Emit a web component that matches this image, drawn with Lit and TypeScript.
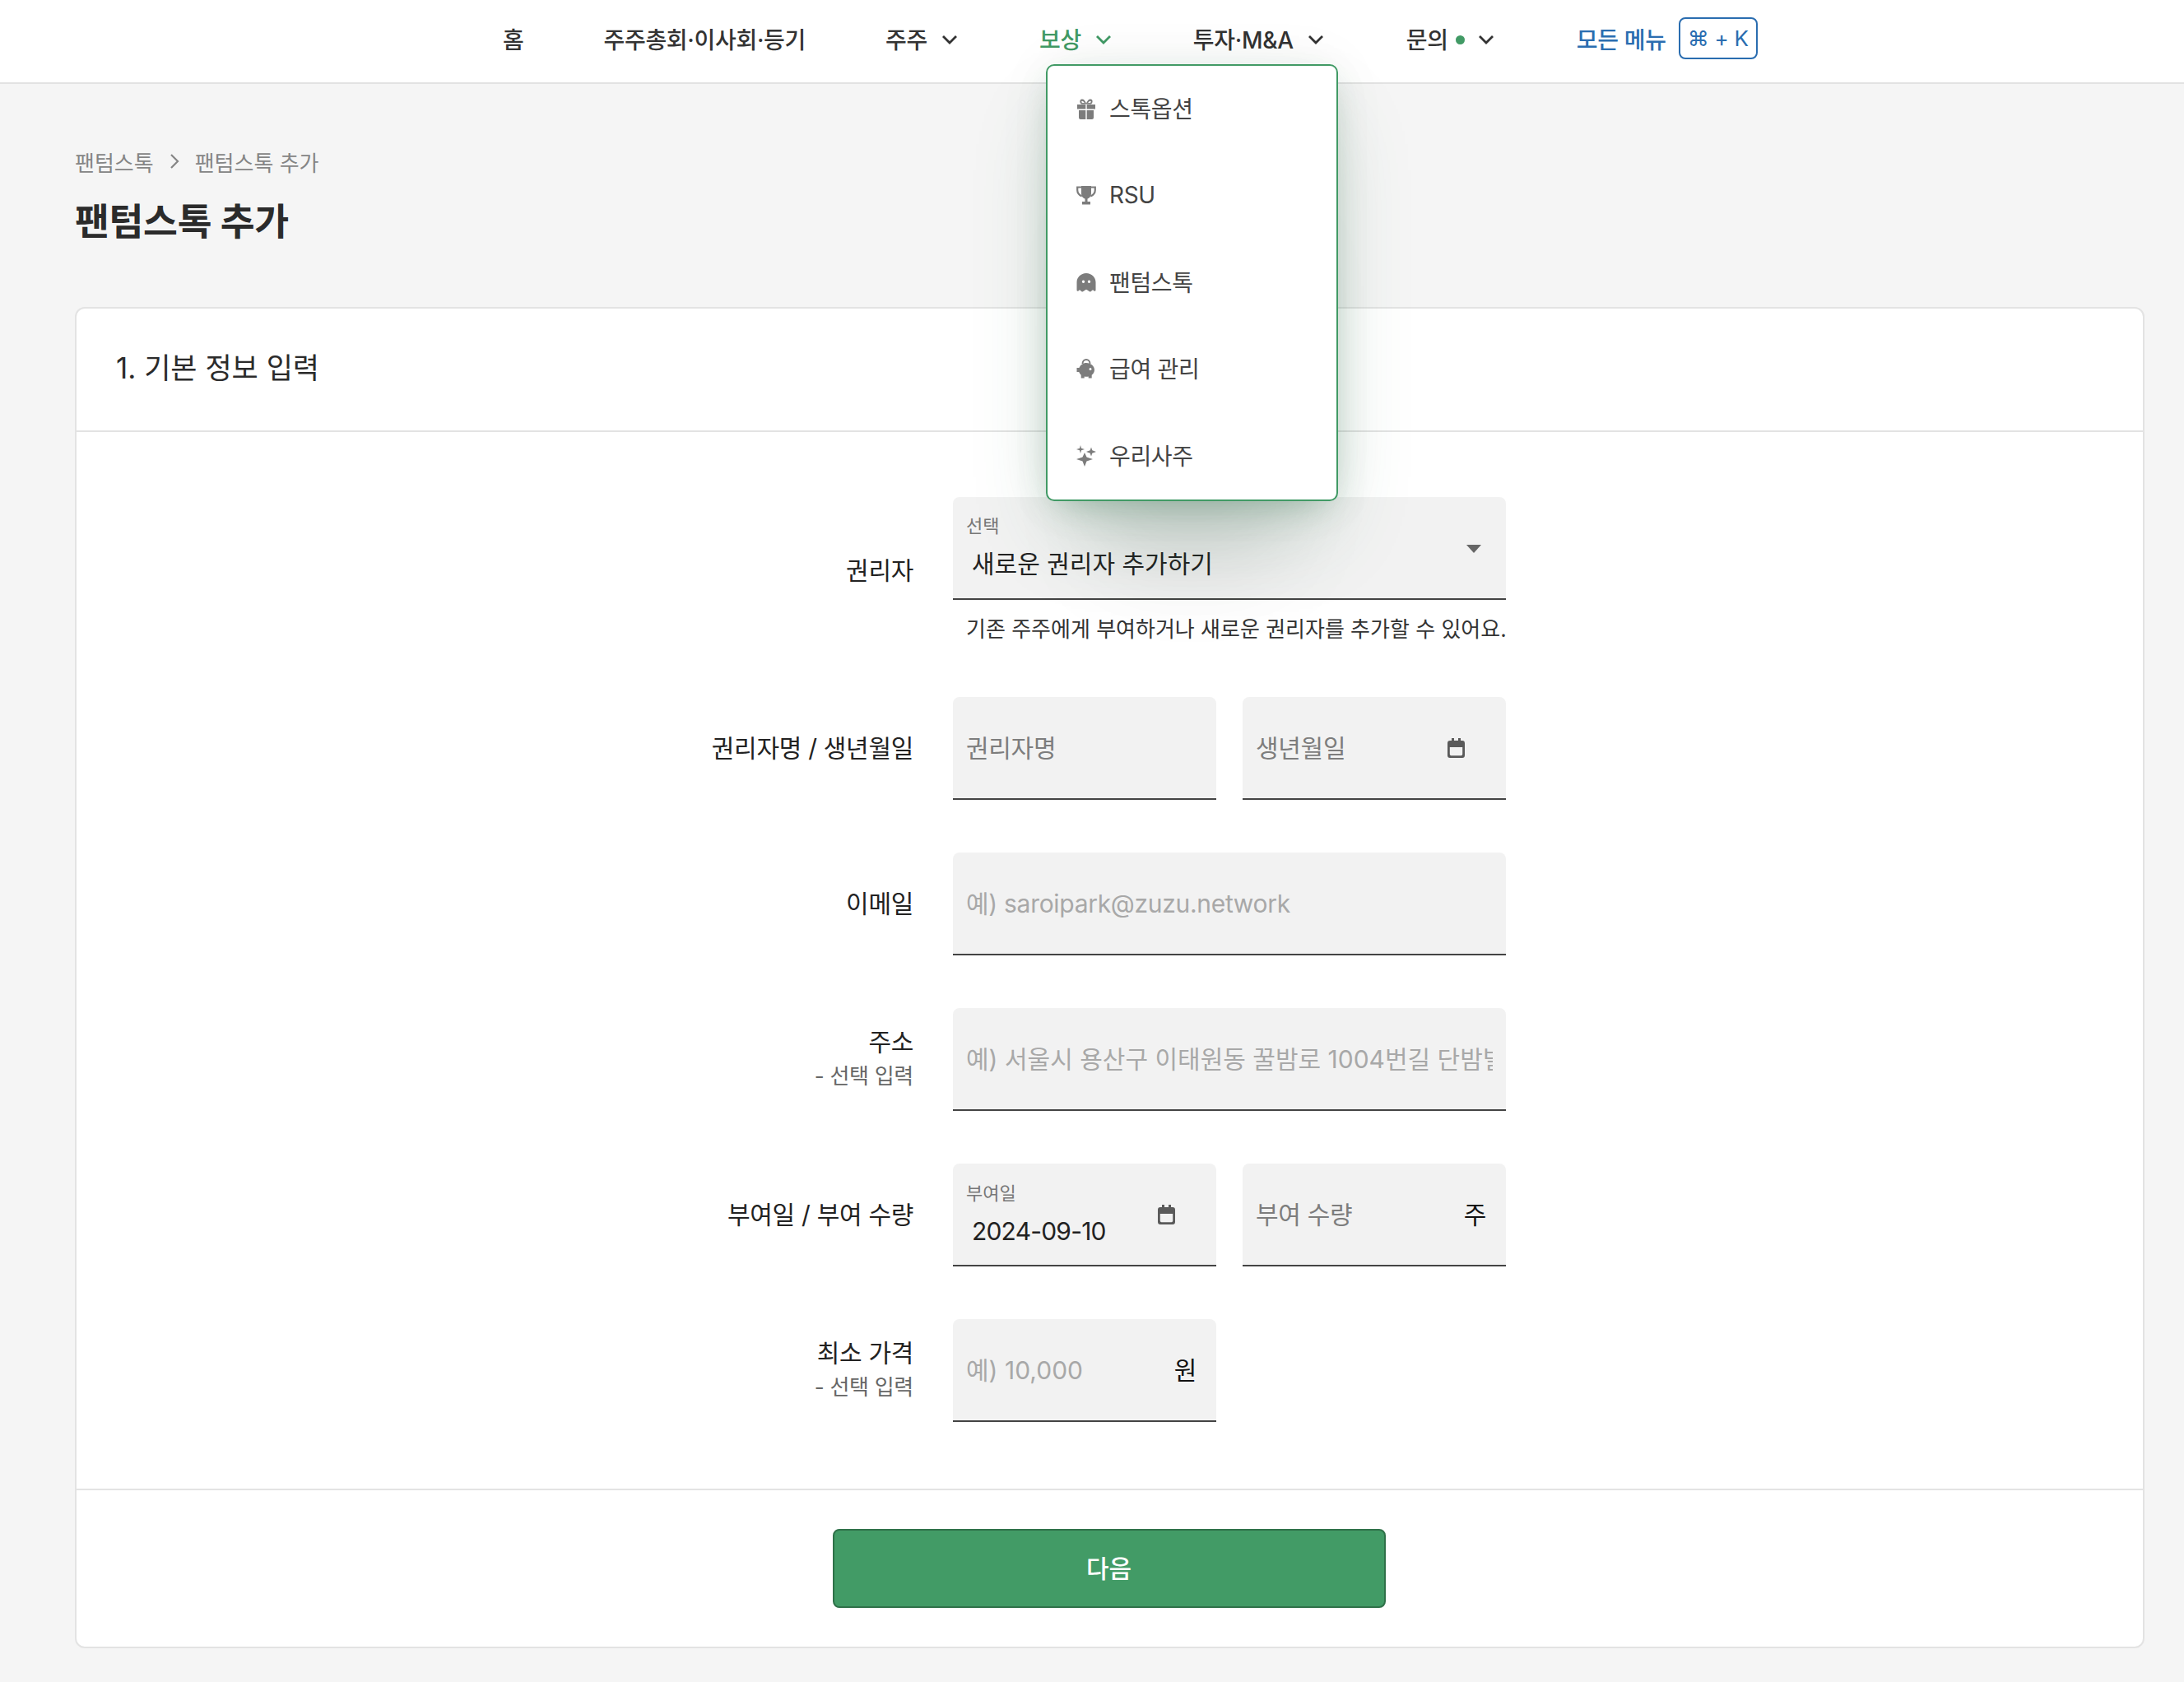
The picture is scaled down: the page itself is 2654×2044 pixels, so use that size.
import { LitElement, html, css, svg } from "lit";
import { customElement } from "lit/decorators.js";

const chevron = html`<svg class="chev" viewBox="0 0 24 24"><path d="M4 8l8 8 8-8" fill="none" stroke="currentColor" stroke-width="2.8"/></svg>`;
const calendar = html`<svg class="cal" viewBox="0 0 21 24"><path fill="#5a5a5a" d="M5 0h3v3h5V0h3v3h2a3 3 0 0 1 3 3v15a3 3 0 0 1-3 3H3a3 3 0 0 1-3-3V6a3 3 0 0 1 3-3h2zM2.800 11v8.500a1.700 1.700 0 0 0 1.700 1.700h12a1.700 1.700 0 0 0 1.700-1.700V11z"/></svg>`;

const menuIcons = {
  gift: svg`<path d="M1 7h10.300v5.500H1zM12.700 7H23v5.500H12.700zM3 14h8.300v11H5a2 2 0 0 1-2-2zM12.700 14H21v9a2 2 0 0 1-2 2h-6.300z"/><path fill-rule="evenodd" d="M12 5.500C10.500 2 8.500 0 6.500 .5 4 1 3.500 4.500 6 6.500h12C20.500 4.500 20 1 17.500 .5 15.500 0 13.500 2 12 5.500zM6.800 2.700c1-.3 2.500 1.200 3 2.300H7.300c-1.300-.7-1.300-2 -.5-2.300zM17.200 2.700c.8.300.8 1.600-.5 2.300h-2.500c.5-1.100 2-2.600 3-2.300z"/>`,
  trophy: svg`<path d="M6 1h12v9c0 3.500-2.500 6-4.500 6.500V20H17v3.500H7V20h3.500v-3.500C8.500 16 6 13.500 6 10z"/><path fill="none" stroke="currentColor" stroke-width="2.200" d="M6 2.500H1.200v3.500c0 4 2.300 6 5.500 7.500M18 2.500h4.800V6c0 4-2.300 6-5.500 7.500"/>`,
  ghost: svg`<path fill-rule="evenodd" d="M12 1c6.500 0 11.500 5 11.500 11v9.500c0 1.200-1.200 1.700-2 1l-1.500-1.300-2.400 2c-.5.400-1.200.4-1.700 0L12.500 21h-1l-3.400 2.200c-.5.400-1.200.4-1.700 0L4 21.200l-1.500 1.300c-.8.700-2 .2-2-1V12C.5 6 5.500 1 12 1zM8.500 9.500a1.700 1.700 0 1 0 0 3.400 1.700 1.700 0 0 0 0-3.400zM15.500 9.500a1.700 1.700 0 1 0 0 3.400 1.700 1.700 0 0 0 0-3.400z"/>`,
  piggy: svg`<path fill-rule="evenodd" d="M12 5c5.500 0 10 3.800 10 8.500 0 2.500-1.300 4.700-3.300 6.200V23.500h-4V21.500a12 12 0 0 1-5 0v2h-4v-3.800A8.500 8.500 0 0 1 3.200 16H.5v-5h2.900C5 7.500 8.200 5 12 5zM17 11a1.500 1.500 0 1 0 0 3 1.500 1.500 0 0 0 0-3z"/><path fill="none" stroke="currentColor" stroke-width="2" d="M7.500 6c0-3 2-5 4.500-5s4.500 2 4.500 5"/>`,
  spark: svg`<path d="M10 9l2.500 5.500L20 17l-7.500 2.500L10 26l-2.500-6.500L0 17l7.500-2.500zM5 0l1 3.800L10 5 6 6.200 5 10 4 6.200 0 5l4-1.200zM18 2.500l1.300 3.700L24 8l-4.700 1.800L18 13.500l-1.300-3.700L12 8l4.700-1.800z"/>`,
};

const menuItems: [keyof typeof menuIcons, string][] = [
  ["gift", "스톡옵션"],
  ["trophy", "RSU"],
  ["ghost", "팬텀스톡"],
  ["piggy", "급여 관리"],
  ["spark", "우리사주"],
];

@customElement("app-root")
export class AppRoot extends LitElement {
  static styles = css`
    :host {
      display: block;
      min-height: 2044px;
      background: #f5f5f5;
      color: #2b2b2b;
      font-family: "Inter", "Noto Sans CJK KR", "DejaVu Sans", sans-serif;
      font-size: 30px;
    }
    * { box-sizing: border-box; }
    .top {
      display: flex;
      height: 102px;
      padding-left: 611px;
      gap: 97px;
      background: #fff;
      border-bottom: 2px solid #e2e2e2;
      font-size: 28px;
      font-weight: 500;
      color: #333;
      letter-spacing: -0.3px;
    }
    .nav {
      position: relative;
      display: flex;
      align-items: center;
      gap: 15px;
      height: 93px;
      white-space: nowrap;
    }
    .nav.on { color: #419a65; }
    .chev { width: 24px; height: 24px; display: block; margin-top: 3px; }
    .dot { width: 11px; height: 11px; border-radius: 50%; background: #419a65; margin: 3px 0 0 9px; }
    .dots { gap: 0; margin-left: 1px; }
    .dots .chev { margin-left: 14px; }
    .all { color: #2a6db0; gap: 15px; margin-left: 1px; }
    .kbd {
      display: flex;
      align-items: center;
      justify-content: center;
      width: 96px;
      height: 51px;
      border: 2px solid #2a6db0;
      border-radius: 8px;
      font-size: 26px;
      font-weight: 400;
    }
    .menu {
      position: absolute;
      left: 8px;
      top: 78px;
      width: 355px;
      height: 531px;
      z-index: 5;
      display: flex;
      flex-direction: column;
      background: #fff;
      border: 2px solid #419a65;
      border-radius: 10px;
      box-shadow:
        0 50px 100px -20px rgba(50, 120, 80, 0.24),
        0 14px 40px -14px rgba(50, 120, 80, 0.34),
        0 140px 120px -70px rgba(0, 0, 0, 0.1),
        0 0 70px rgba(0, 0, 0, 0.05);
      color: #444;
      font-size: 28px;
      font-weight: 400;
    }
    .mi {
      flex: 1;
      display: flex;
      align-items: center;
      gap: 16px;
      padding-left: 35px;
    }
    .mi span { padding-bottom: 3px; }
    .mi svg { width: 24px; height: 26px; display: block; fill: #7c7c7c; color: #7c7c7c; }
    main { padding: 76px 48px 41px 91px; }
    .crumb {
      display: flex;
      align-items: center;
      height: 36px;
      gap: 13px;
      font-size: 26px;
      color: #858585;
    }
    .crumb svg { width: 24px; height: 24px; display: block; }
    h1 {
      margin: 26px 0 0;
      height: 60px;
      line-height: 60px;
      font-size: 45.5px;
      font-weight: 700;
      color: #2b2b2b;
      letter-spacing: -0.3px;
    }
    .card {
      margin-top: 73px;
      background: #fff;
      border: 2px solid #e3e3e3;
      border-radius: 12px;
    }
    .card-h {
      display: flex;
      align-items: center;
      height: 150px;
      padding: 0 0 10px 48px;
      border-bottom: 2px solid #e3e3e3;
      font-size: 35px;
      font-weight: 400;
    }
    .card-b {
      display: flex;
      flex-direction: column;
      gap: 64px;
      padding: 79px 0 81px;
    }
    .row {
      display: grid;
      grid-template-columns: 1017px 672px;
      column-gap: 48px;
      align-items: center;
    }
    .lab { text-align: right; font-size: 30px; font-weight: 400; color: #222; line-height: 42px; letter-spacing: -0.3px; padding-bottom: 2px; }
    .sub { font-size: 26px; font-weight: 400; color: #666; line-height: 42px; }
    .two { display: flex; gap: 32px; }
    .one { width: 320px; }
    .two .f { flex: 1; min-width: 0; }
    .f {
      display: flex;
      align-items: center;
      height: 125px;
      padding: 0 16px 3px;
      background: #f2f2f2;
      border-bottom: 2px solid #444;
      border-radius: 8px 8px 0 0;
      overflow: hidden;
      letter-spacing: -0.3px;
    }
    .grow { flex: 1; min-width: 0; white-space: nowrap; overflow: hidden; }
    .ph { color: #7d7d7d; }
    .ph2 { color: #a8a8a8; }
    .addr { letter-spacing: 0; }
    .stack { flex: 1; min-width: 0; align-self: flex-start; letter-spacing: 0; }
    .small { font-size: 22px; line-height: 28px; color: #777; }
    .val { line-height: 40px; padding-left: 7px; color: #222; }
    .sel { padding-top: 21px; }
    .sel .val { margin-top: 12px; }
    .dat { padding-top: 22px; }
    .dat .val { margin-top: 12px; letter-spacing: -0.8px; }
    .arrow {
      width: 0; height: 0;
      margin: 5px 14px 0 0;
      border-left: 9px solid transparent;
      border-right: 9px solid transparent;
      border-top: 10px solid #666;
    }
    .cal { width: 21px; height: 24px; display: block; margin: 3px 34px 0 0; }
    .unit { margin-right: 8px; color: #111; font-weight: 400; }
    .help { margin-top: 18px; padding-left: 16px; font-size: 26px; line-height: 36px; color: #333; white-space: nowrap; }
    .card-f {
      display: flex;
      justify-content: center;
      padding: 47px 2px 47px 0;
      border-top: 2px solid #e3e3e3;
    }
    button {
      width: 672px;
      height: 96px;
      background: #429b66;
      border: 2px solid #2f7149;
      border-radius: 8px;
      color: #fff;
      font: inherit;
      font-size: 30px;
      font-weight: 500;
      padding-bottom: 6px;
    }
  `;

  private row(label: unknown, content: unknown) {
    return html`<div class="row"><div class="lab">${label}</div><div>${content}</div></div>`;
  }

  render() {
    const opt = html`<div class="sub">- 선택 입력</div>`;
    return html`
      <header class="top">
        <div class="nav">홈</div>
        <div class="nav">주주총회·이사회·등기</div>
        <div class="nav">주주 ${chevron}</div>
        <div class="nav on">보상 ${chevron}
          <div class="menu">
            ${menuItems.map(([k, t]) => html`<div class="mi"><svg viewBox="0 0 24 26">${menuIcons[k]}</svg><span>${t}</span></div>`)}
          </div>
        </div>
        <div class="nav">투자·M&amp;A ${chevron}</div>
        <div class="nav dots">문의<span class="dot"></span>${chevron}</div>
        <div class="nav all">모든 메뉴 <span class="kbd">⌘ + K</span></div>
      </header>
      <main>
        <div class="crumb">
          <span>팬텀스톡</span>
          <svg viewBox="0 0 24 24"><path d="M8 4l8 8-8 8" fill="none" stroke="#858585" stroke-width="2.2"/></svg>
          <span>팬텀스톡 추가</span>
        </div>
        <h1>팬텀스톡 추가</h1>
        <section class="card">
          <div class="card-h">1. 기본 정보 입력</div>
          <div class="card-b">
            ${this.row("권리자", html`
              <div class="f">
                <div class="stack sel"><div class="small">선택</div><div class="val">새로운 권리자 추가하기</div></div>
                <span class="arrow"></span>
              </div>
              <div class="help">기존 주주에게 부여하거나 새로운 권리자를 추가할 수 있어요.</div>`)}
            ${this.row("권리자명 / 생년월일", html`
              <div class="two">
                <div class="f"><span class="grow ph">권리자명</span></div>
                <div class="f"><span class="grow ph">생년월일</span>${calendar}</div>
              </div>`)}
            ${this.row("이메일", html`<div class="f"><span class="grow ph2">예) saroipark@zuzu.network</span></div>`)}
            ${this.row(html`주소${opt}`, html`<div class="f"><span class="grow ph2 addr">예) 서울시 용산구 이태원동 꿀밤로 1004번길 단밤빌라 101호</span></div>`)}
            ${this.row("부여일 / 부여 수량", html`
              <div class="two">
                <div class="f">
                  <div class="stack dat"><div class="small">부여일</div><div class="val">2024-09-10</div></div>
                  ${calendar}
                </div>
                <div class="f"><span class="grow ph">부여 수량</span><span class="unit">주</span></div>
              </div>`)}
            ${this.row(html`최소 가격${opt}`, html`
              <div class="f one"><span class="grow ph2 addr">예) 10,000</span><span class="unit">원</span></div>`)}
          </div>
          <div class="card-f"><button>다음</button></div>
        </section>
      </main>
    `;
  }
}
